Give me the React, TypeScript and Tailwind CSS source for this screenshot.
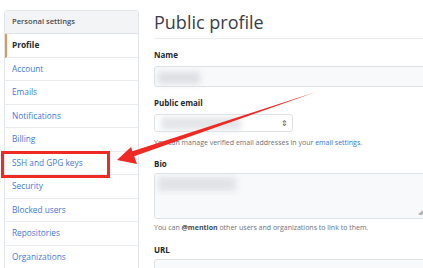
import React from "react";

const items = [
  "Account",
  "Emails",
  "Notifications",
  "Billing",
  "SSH and GPG keys",
  "Security",
  "Blocked users",
  "Repositories",
  "Organizations",
];

export default function App() {
  return (
    <div
      className="relative w-[423px] h-[268px] overflow-hidden bg-white flex text-[#24292e]"
      style={{ fontFamily: '"Open Sans", "Noto Sans", sans-serif' }}
    >
      {/* Sidebar */}
      <div className="ml-[4px] mt-[10px] w-[135px] shrink-0 border border-[#e1e4e8] rounded-t-[3px] self-start">
        <div className="h-[23px] flex items-center pl-[7px] bg-[#f3f4f6] border-b border-[#e1e4e8] text-[7.6px] font-semibold text-[#4a4f55]">
          Personal settings
        </div>
        <div className="h-[23.5px] flex items-center pl-[5px] border-l-[2px] border-[#e9915a] border-b border-b-[#eaecef] text-[8.3px] font-bold text-[#24292e]">
          Profile
        </div>
        {items.map((t) => (
          <div
            key={t}
            className="h-[23.5px] flex items-center pl-[7px] border-b border-[#eaecef] text-[8.3px] text-[#3f78d9]"
          >
            {t}
          </div>
        ))}
      </div>

      {/* Main */}
      <div className="ml-[15px] flex-1 min-w-0">
        <div className="mt-[11px] pb-[5px] border-b border-[#eaecef] text-[18px] leading-[22px] text-[#3b4046]">
          Public profile
        </div>
        <div className="mt-[10px] text-[8px] font-bold leading-[12px]">Name</div>
        <div className="relative mt-[5px] h-[21px] w-[300px] border border-[#dfe2e5] rounded-[3px] bg-[#f8f9fb]">
          <div className="absolute left-[3px] top-[5px] w-[42px] h-[12px] bg-[#dcdfe3] blur-[3px]" />
        </div>
        <div className="mt-[10px] text-[8px] font-bold leading-[12px]">Public email</div>
        <div className="relative mt-[5px] h-[18px] w-[139px] border border-[#dfe2e5] rounded-[3px] bg-white flex items-center justify-end pr-[4px]">
          <div className="absolute left-[6px] top-[2px] w-[80px] h-[13px] bg-[#e3e5e8] blur-[3px]" />
          <span className="text-[8px] text-[#555]">⇕</span>
        </div>
        <div className="mt-[6px] text-[7px] leading-[10px] text-[#6a737d] whitespace-nowrap">
          You can manage verified email addresses in your{" "}
          <span className="text-[#3a74d6]">email settings</span>.
        </div>
        <div className="mt-[10px] text-[8px] font-bold leading-[12px]">Bio</div>
        <div className="relative mt-[3px] h-[46px] w-[300px] border border-[#dfe2e5] rounded-[3px] bg-[#f8f9fb]">
          <div className="absolute left-[3px] top-[3px] w-[78px] h-[14px] bg-[#e0e2e6] blur-[3px]" />
          <div className="absolute left-[263px] bottom-[1px] text-[6px] text-[#aaa]">◢</div>
        </div>
        <div className="mt-[4px] text-[7px] leading-[10px] text-[#6a737d] whitespace-nowrap">
          You can <span className="font-bold text-[#444d56]">@mention</span> other users and organizations to link to them.
        </div>
        <div className="mt-[11px] text-[8px] font-bold leading-[12px]">URL</div>
        <div className="mt-[3px] h-[21px] w-[300px] border border-[#dfe2e5] rounded-[3px] bg-[#f8f9fb]" />
      </div>

      {/* Annotations */}
      <div className="absolute left-[1px] top-[151px] w-[109px] h-[27px] border-[3px] border-[#ee2a24]" />
      <svg className="absolute left-0 top-0" width="423" height="268" viewBox="0 0 423 268">
        <polygon points="316,92 130,152 132,157" fill="#ee2a24" />
        <polygon points="117,160 131,147 137,164" fill="#ee2a24" />
      </svg>
    </div>
  );
}
